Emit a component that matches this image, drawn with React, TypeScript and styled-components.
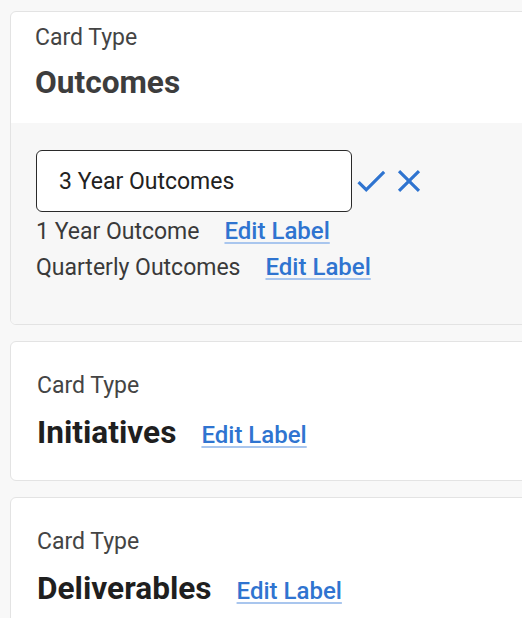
import React from 'react';
import styled, { createGlobalStyle } from 'styled-components';

const GlobalStyle = createGlobalStyle`
  html, body {
    margin: 0;
    padding: 0;
    background: #f8f8f8;
    overflow: hidden;
  }
  body {
    font-family: Roboto, "Liberation Sans", Arial, sans-serif;
  }
`;

const Page = styled.div`
  display: flex;
  flex-direction: column;
  gap: 16px;
  padding: 11px 0 0 10px;
  width: 540px;
`;

const Card = styled.section`
  background: #fff;
  border: 1px solid #e3e3e3;
  border-radius: 6px;
  overflow: hidden;
`;

const CardHeader = styled.div<{ $editing?: boolean }>`
  display: flex;
  flex-direction: column;
  gap: ${p => (p.$editing ? '12px' : '14px')};
  padding: ${p => (p.$editing ? '12px 24px 21px' : '30px 26px 28px')};
`;

const Overline = styled.div`
  font-size: 23px;
  line-height: 28px;
  color: #444;
`;

const TitleRow = styled.div`
  display: flex;
  align-items: baseline;
  gap: 25px;
`;

const Title = styled.h2<{ $muted?: boolean }>`
  margin: 0;
  font-size: 31.6px;
  line-height: 38px;
  font-weight: 700;
  color: ${p => (p.$muted ? '#3d3d3d' : '#1f1f1f')};
`;

const EditLink = styled.a`
  font-size: 24px;
  line-height: 22px;
  font-weight: 500;
  color: #2f74d0;
  text-decoration: underline;
  text-decoration-color: #a9c6ee;
  text-decoration-thickness: 2px;
  text-underline-offset: 3px;
  cursor: pointer;
`;

const EditPanel = styled.div`
  background: #f7f7f7;
  padding: 27px 25px 42px;
  display: flex;
  flex-direction: column;
`;

const InputRow = styled.div`
  display: flex;
  align-items: center;
`;

const LabelInput = styled.input`
  box-sizing: border-box;
  width: 316px;
  height: 62px;
  border: 1px solid #2a2a2a;
  border-radius: 6px;
  padding: 0 22px;
  font-family: inherit;
  font-size: 23px;
  color: #222;
  background: #fff;
  outline: none;
`;

const IconButton = styled.button`
  display: flex;
  border: 0;
  padding: 0;
  background: none;
  color: #2f74d0;
  cursor: pointer;
`;

const LevelList = styled.div`
  display: flex;
  flex-direction: column;
  gap: 8px;
  margin-top: 6px;
`;

const LevelRow = styled.div`
  display: flex;
  align-items: baseline;
  gap: 25px;
`;

const LevelName = styled.span`
  font-size: 23px;
  line-height: 28px;
  color: #3a3a3a;
`;

const CheckIcon = () => (
  <svg width="38" height="38" viewBox="0 0 24 24" fill="currentColor">
    <path d="M9 16.17L4.83 12l-1.42 1.41L9 19 21 7l-1.41-1.41z" />
  </svg>
);

const CloseIcon = () => (
  <svg width="38" height="38" viewBox="0 0 24 24" fill="currentColor">
    <path d="M19 6.41L17.59 5 12 10.59 6.41 5 5 6.41 10.59 12 5 17.59 6.41 19 12 13.41 17.59 19 19 17.59 13.41 12z" />
  </svg>
);

const levels = ['1 Year Outcome', 'Quarterly Outcomes'];

export default function App() {
  return (
    <>
      <GlobalStyle />
      <Page>
        <Card>
          <CardHeader $editing>
            <Overline>Card Type</Overline>
            <Title $muted>Outcomes</Title>
          </CardHeader>
          <EditPanel>
            <InputRow>
              <LabelInput defaultValue="3 Year Outcomes" />
              <IconButton aria-label="Save">
                <CheckIcon />
              </IconButton>
              <IconButton aria-label="Cancel">
                <CloseIcon />
              </IconButton>
            </InputRow>
            <LevelList>
              {levels.map(level => (
                <LevelRow key={level}>
                  <LevelName>{level}</LevelName>
                  <EditLink>Edit Label</EditLink>
                </LevelRow>
              ))}
            </LevelList>
          </EditPanel>
        </Card>
        <Card>
          <CardHeader>
            <Overline>Card Type</Overline>
            <TitleRow>
              <Title>Initiatives</Title>
              <EditLink>Edit Label</EditLink>
            </TitleRow>
          </CardHeader>
        </Card>
        <Card>
          <CardHeader>
            <Overline>Card Type</Overline>
            <TitleRow>
              <Title>Deliverables</Title>
              <EditLink>Edit Label</EditLink>
            </TitleRow>
          </CardHeader>
        </Card>
      </Page>
    </>
  );
}
